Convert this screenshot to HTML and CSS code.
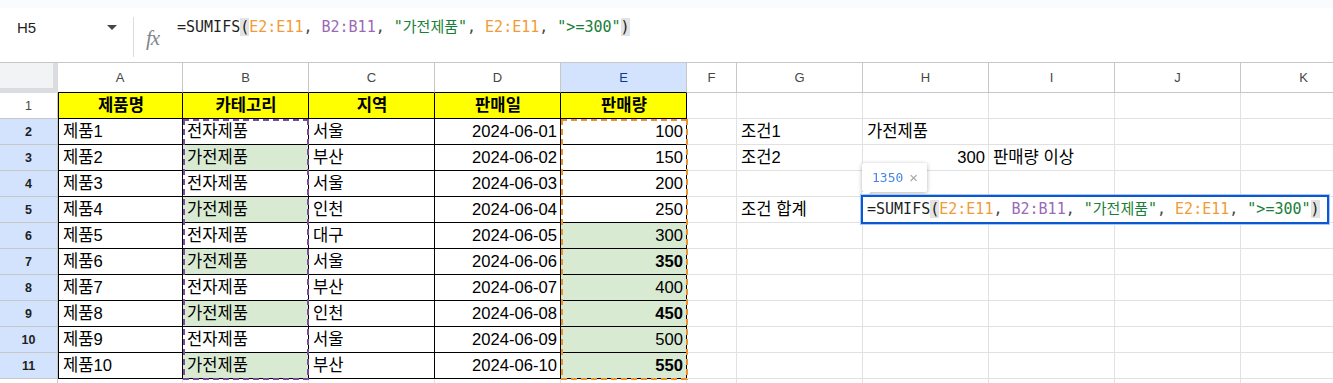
FILE: index.html
```html
<!DOCTYPE html>
<html lang="ko">
<head>
    <meta charset="UTF-8">
    <meta name="viewport" content="width=device-width, initial-scale=1.0">
    <title>Sheet</title>
    <link rel="stylesheet" href="styles.css">
</head>
<body>
    <div class="topstrip"></div>
    <div class="formulabar">
        <div class="namebox"><span>H5</span><span class="caret"></span></div>
        <div class="sep"></div>
        <div class="fx">fx</div>
        <div class="formula">=SUMIFS<span class="paren">(</span><span class="ref-e">E2:E11</span><span class="comma">, </span><span class="ref-b">B2:B11</span><span class="comma">, </span><span class="str">"가전제품"</span><span class="comma">, </span><span class="ref-e">E2:E11</span><span class="comma">, </span><span class="str">"&gt;=300"</span><span class="paren">)</span></div>
    </div>

    <div class="sheet">
        <div class="grid" id="grid"></div>

        <div class="range range-b"></div>
        <div class="range range-e"></div>

        <div class="tip"><span class="tip-value">1350</span><span class="tip-close">×</span></div>
        <div class="editor">=SUMIFS<span class="paren">(</span><span class="ref-e">E2:E11</span><span class="comma">, </span><span class="ref-b">B2:B11</span><span class="comma">, </span><span class="str">"가전제품"</span><span class="comma">, </span><span class="ref-e">E2:E11</span><span class="comma">, </span><span class="str">"&gt;=300"</span><span class="paren">)</span></div>
    </div>

    <script>
        const letters = ['A', 'B', 'C', 'D', 'E', 'F', 'G', 'H', 'I', 'J', 'K'];

        const data = [
            ['제품명', '카테고리', '지역', '판매일', '판매량'],
            ['제품1', '전자제품', '서울', '2024-06-01', '100'],
            ['제품2', '가전제품', '부산', '2024-06-02', '150'],
            ['제품3', '전자제품', '서울', '2024-06-03', '200'],
            ['제품4', '가전제품', '인천', '2024-06-04', '250'],
            ['제품5', '전자제품', '대구', '2024-06-05', '300'],
            ['제품6', '가전제품', '서울', '2024-06-06', '350'],
            ['제품7', '전자제품', '부산', '2024-06-07', '400'],
            ['제품8', '가전제품', '인천', '2024-06-08', '450'],
            ['제품9', '전자제품', '서울', '2024-06-09', '500'],
            ['제품10', '가전제품', '부산', '2024-06-10', '550']
        ];

        const extra = {
            G2: '조건1',
            H2: '가전제품',
            G3: '조건2',
            H3: '300',
            I3: '판매량 이상',
            G5: '조건 합계'
        };

        function buildGrid() {
            let html = '<div class="corner"></div>';
            letters.forEach((l, i) => {
                let cls = 'colhead';
                if (i < 5) cls += ' dark';
                if (l === 'E') cls += ' sel';
                html += `<div class="${cls}">${l}</div>`;
            });

            // row 12 only peeks in at the bottom edge, its number stays below the fold
            for (let r = 1; r <= 12; r++) {
                const selected = r >= 2 && r <= 11;
                html += `<div class="rowhead${selected ? ' sel' : ''}">${r <= 11 ? r : ''}</div>`;

                letters.forEach((l, i) => {
                    let cls = 'cell';
                    let text = '';
                    if (r <= 11 && i < 5) {
                        cls += ' data';
                        text = data[r - 1][i];
                        if (i === 0) cls += ' first';
                        if (r === 1) cls += ' head';
                        if (r >= 2 && (i === 3 || i === 4)) cls += ' right';
                        if ((i === 1 && r >= 3 && r % 2 === 1) || (i === 4 && r >= 6)) cls += ' green';
                        if (i === 4 && [7, 9, 11].includes(r)) cls += ' bold';
                    } else if (extra[l + r]) {
                        text = extra[l + r];
                        if (l + r === 'H3') cls += ' right';
                    }
                    html += `<div class="${cls}">${text}</div>`;
                });
            }
            document.getElementById('grid').innerHTML = html;
        }

        buildGrid();
    </script>
</body>
</html>
```

FILE: styles.css
```css
* {
    box-sizing: border-box;
}
body {
    margin: 0;
    width: 1333px;
    height: 383px;
    overflow: hidden;
    background: #fff;
    font-family: "Liberation Sans", "Noto Sans CJK KR", sans-serif;
    color: #000;
}
.topstrip {
    height: 8px;
    background: #f9fbfd;
}

/* formula bar */
.formulabar {
    display: flex;
    align-items: flex-start;
    height: 55px;
    border-bottom: 1px solid #c7c7c7;
}
.namebox {
    display: flex;
    align-items: center;
    width: 133px;
    height: 20px;
    margin-top: 9px;
    padding-left: 17px;
    font-size: 15px;
    color: #1f1f1f;
}
.caret {
    margin-left: auto;
    margin-right: 16px;
    width: 0;
    height: 0;
    border-left: 5px solid transparent;
    border-right: 5px solid transparent;
    border-top: 5px solid #444746;
}
.sep {
    width: 1px;
    height: 40px;
    margin-top: 9px;
    background: #dadce0;
}
.fx {
    margin-top: 19px;
    margin-left: 12px;
    width: 19px;
    font-family: "Liberation Serif", serif;
    font-style: italic;
    font-size: 21px;
    line-height: 22px;
    color: #80868b;
    letter-spacing: -1px;
}
.formula {
    margin-top: 9px;
    margin-left: 12px;
    font-family: "DejaVu Sans Mono", "Noto Sans CJK KR", monospace;
    font-size: 15px;
    line-height: 20px;
    color: #1f1f1f;
    white-space: pre;
}
.paren {
    background: #e3e3e3;
}
.ref-e {
    color: #f29b36;
}
.ref-b {
    color: #9b69b5;
}
.str {
    color: #188038;
}
.comma {
    color: #444746;
}

/* sheet */
.sheet {
    position: relative;
}
.grid {
    display: grid;
    grid-template-columns: 58px 125px repeat(4, 126px) 50px repeat(5, 126px);
    grid-template-rows: 30px repeat(12, 26px);
}
.corner {
    background: #f1f3f4;
    border-right: 5px solid #dadce0;
    border-bottom: 5px solid #dadce0;
}
.colhead {
    display: flex;
    align-items: center;
    justify-content: center;
    font-size: 13px;
    color: #444746;
    border-right: 1px solid #c7c7c7;
    border-bottom: 1px solid #c7c7c7;
}
.colhead.dark {
    border-bottom-color: #000;
}
.colhead.sel {
    background: #d3e3fd;
    color: #0b3a8c;
}
.rowhead {
    display: flex;
    align-items: center;
    justify-content: center;
    font-size: 12.5px;
    color: #444746;
    border-right: 1px solid #c7c7c7;
    border-bottom: 1px solid #c7c7c7;
}
.rowhead.sel {
    background: #d3e3fd;
    color: #1f1f1f;
    font-weight: bold;
}
.cell {
    padding: 0 3px 0 4px;
    font-size: 16.6px;
    line-height: 25px;
    white-space: nowrap;
    border-right: 1px solid #e1e1e1;
    border-bottom: 1px solid #e1e1e1;
}
.cell.data {
    border-right-color: #000;
    border-bottom-color: #000;
}
.cell.first {
    border-left: 1px solid #000;
}
.cell.head {
    background: #ffff00;
    font-weight: bold;
    text-align: center;
}
.cell.right {
    text-align: right;
}
.cell.green {
    background: #d9ead3;
}
.cell.bold {
    font-weight: bold;
}

/* range highlights while editing: dashed frame drawn with gradients */
.range {
    position: absolute;
    top: 56px;
    height: 261px;
    pointer-events: none;
    background:
        repeating-linear-gradient(90deg, var(--c) 0 6px, transparent 6px 10px) top left / 100% 2px no-repeat,
        repeating-linear-gradient(90deg, var(--c) 0 6px, transparent 6px 10px) bottom left / 100% 2px no-repeat,
        repeating-linear-gradient(180deg, var(--c) 0 6px, transparent 6px 10px) top left / 2px 100% no-repeat,
        repeating-linear-gradient(180deg, var(--c) 0 6px, transparent 6px 10px) top right / 2px 100% no-repeat;
}
.range-b {
    --c: #7b4a9c;
    left: 183px;
    width: 126px;
}
.range-e {
    --c: #f0922a;
    left: 561px;
    width: 127px;
}

/* result preview tooltip */
.tip {
    position: absolute;
    left: 862px;
    top: 100px;
    width: 65px;
    height: 29px;
    display: flex;
    align-items: center;
    padding-left: 10px;
    background: #fff;
    border-radius: 2px;
    filter: drop-shadow(0 1px 2px rgba(0, 0, 0, 0.3));
    font-family: "DejaVu Sans Mono", monospace;
    font-size: 13px;
}
.tip::after {
    content: "";
    position: absolute;
    left: 0;
    bottom: -7px;
    border-top: 7px solid #fff;
    border-right: 9px solid transparent;
}
.tip-value {
    color: #4a86e8;
}
.tip-close {
    margin-left: 6px;
    font-family: "Liberation Sans", sans-serif;
    font-size: 15px;
    color: #a0a4a8;
}

/* in-cell editor on H5 */
.editor {
    position: absolute;
    left: 861px;
    top: 132px;
    width: 468px;
    height: 29px;
    padding-left: 4px;
    background: #fff;
    border: 2px solid #0b57d0;
    box-shadow: 0 0 0 1px #a8c7fa;
    font-family: "DejaVu Sans Mono", "Noto Sans CJK KR", monospace;
    font-size: 15px;
    line-height: 25px;
    color: #1f1f1f;
    white-space: pre;
}
```
